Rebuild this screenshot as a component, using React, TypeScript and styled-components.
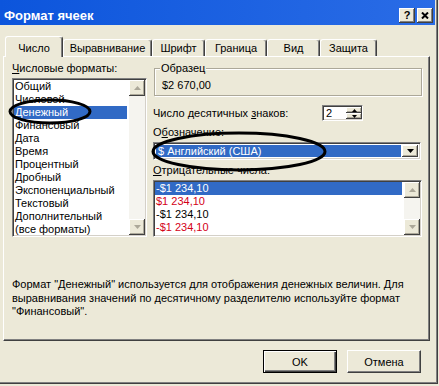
import React from "react";
import styled, { createGlobalStyle } from "styled-components";

const GlobalStyle = createGlobalStyle`
  html, body {
    margin: 0;
    padding: 0;
    background: #ece9d8;
  }
  body {
    font-family: "Liberation Sans", Arial, sans-serif;
    font-size: 11px;
    color: #000;
  }
  * { box-sizing: border-box; }
`;

const Window = styled.div`
  position: relative;
  width: 438px;
  height: 384px;
  border-right: 1px solid #404040;
  border-bottom: 1px solid #404040;
  box-shadow: inset -1px -1px 0 #808080;
  background: #ece9d8;
  display: flex;
  flex-direction: column;
`;

const TitleBar = styled.div`
  width: 435px;
  height: 25px;
  padding: 5px 2px 0 4px;
  display: flex;
  align-items: center;
  background: linear-gradient(to right, #0c55dc, #2a6ce6);
  color: #fff;
  font-weight: bold;
  font-size: 13px;
`;

const TitleButtons = styled.div`
  margin-left: auto;
  display: flex;
  gap: 2px;
`;

const TitleButton = styled.div`
  width: 16px;
  height: 15px;
  background: #ece9d8;
  box-shadow: inset -1px -1px 0 #404040, inset 1px 1px 0 #fff,
    inset -2px -2px 0 #808080;
  display: flex;
  align-items: center;
  justify-content: center;
  color: #000;
  font-size: 11px;
  font-weight: bold;
`;

const TabStrip = styled.div`
  position: relative;
  z-index: 1;
  margin-top: 11px;
  height: 20px;
  padding-left: 5px;
  display: flex;
  align-items: flex-end;
`;

const Tab = styled.div<{ $active?: boolean; $w: number }>`
  width: ${(p) => p.$w}px;
  height: ${(p) => (p.$active ? 21 : 17)}px;
  margin-bottom: ${(p) => (p.$active ? -1 : 0)}px;
  padding-top: ${(p) => (p.$active ? 1 : 0)}px;
  background: #ece9d8;
  border-top: 1px solid #fff;
  border-left: 1px solid #fff;
  border-right: 1px solid #404040;
  box-shadow: inset -1px 0 0 #808080;
  border-radius: 3px 3px 0 0;
  display: flex;
  align-items: center;
  justify-content: center;
`;

const Panel = styled.div`
  margin-left: 3px;
  width: 427px;
  height: 285px;
  border-top: 1px solid #fff;
  border-left: 1px solid #fff;
  border-right: 1px solid #404040;
  border-bottom: 1px solid #404040;
  box-shadow: inset -1px -1px 0 #808080;
  padding: 5px 0 0 8px;
  display: grid;
  grid-template-columns: 135px 269px;
  grid-template-rows: 175px auto;
  column-gap: 6px;
  align-content: start;
`;

const Column = styled.div`
  display: flex;
  flex-direction: column;
`;

const Label = styled.div<{ $gap?: number }>`
  line-height: 13px;
  margin-top: ${(p) => p.$gap ?? 0}px;
  white-space: nowrap;
  u { text-decoration: underline; }
`;

const Sunken = styled.div`
  background: #fff;
  border: 1px solid;
  border-color: #808080 #fff #fff #808080;
  box-shadow: inset 1px 1px 0 #404040, inset -1px -1px 0 #d4d0c8;
  padding: 1px;
`;

const ListBox = styled(Sunken)<{ $w: number; $h: number; $gap: number }>`
  width: ${(p) => p.$w}px;
  height: ${(p) => p.$h}px;
  margin-top: ${(p) => p.$gap}px;
  display: flex;
  overflow: hidden;
`;

const Items = styled.div<{ $right: number }>`
  flex: 1;
  padding-right: ${(p) => p.$right}px;
  overflow: hidden;
`;

const Item = styled.div<{ $selected?: boolean; $red?: boolean }>`
  height: 13px;
  line-height: 13px;
  padding-left: 1px;
  white-space: nowrap;
  background: ${(p) => (p.$selected ? "#316ac5" : "transparent")};
  color: ${(p) => (p.$selected ? "#fff" : p.$red ? "#d40018" : "#000")};
`;

const ScrollBar = styled.div`
  width: 16px;
  display: flex;
  flex-direction: column;
  background: #f5f4ef;
`;

const ScrollButton = styled.div<{ $h?: number }>`
  width: 16px;
  height: ${(p) => p.$h ?? 16}px;
  background: #ece9d8;
  box-shadow: inset -1px -1px 0 #404040, inset 1px 1px 0 #fff,
    inset -2px -2px 0 #aca899;
  display: flex;
  align-items: center;
  justify-content: center;
`;

const Track = styled.div`
  flex: 1;
`;

const Group = styled.fieldset`
  margin: 0 0 0 1px;
  width: 268px;
  padding: 4px 5px 3px 5px;
  border: 1px solid #aca899;
  box-shadow: inset 1px 1px 0 #fff, 1px 1px 0 #fff;
  legend {
    padding: 0 1px;
    line-height: 13px;
    background: #ece9d8;
  }
`;

const GroupValue = styled.div`
  line-height: 13px;
  padding-left: 2px;
`;

const SpinRow = styled.div`
  margin-top: 9px;
  height: 17px;
  display: flex;
  align-items: center;
`;

const Spinner = styled(Sunken)`
  margin-left: auto;
  margin-right: 59px;
  width: 41px;
  height: 16px;
  display: flex;
  padding: 1px;
`;

const SpinValue = styled.div`
  flex: 1;
  line-height: 12px;
  padding-left: 2px;
`;

const SpinButtons = styled.div`
  width: 15px;
  display: flex;
  flex-direction: column;
`;

const Combo = styled(Sunken)`
  margin-top: 3px;
  width: 268px;
  height: 18px;
  display: flex;
  padding: 2px;
`;

const ComboValue = styled.div`
  flex: 1;
  background: #316ac5;
  color: #fff;
  line-height: 12px;
  padding-left: 2px;
  margin-right: 1px;
`;

const Description = styled.div`
  grid-column: 1 / -1;
  margin-top: 41px;
  line-height: 13.5px;
  white-space: nowrap;
`;

const ButtonRow = styled.div`
  margin-top: 9px;
  padding-right: 16px;
  display: flex;
  justify-content: flex-end;
  gap: 10px;
`;

const Button = styled.div<{ $default?: boolean }>`
  width: 74px;
  height: 23px;
  display: flex;
  align-items: center;
  justify-content: center;
  background: #ece9d8;
  border: 1px solid;
  border-color: ${(p) => (p.$default ? "#000" : "#fff #404040 #404040 #fff")};
  box-shadow: ${(p) =>
    p.$default
      ? "inset 1px 1px 0 #fff, inset -1px -1px 0 #404040, inset -2px -2px 0 #808080"
      : "inset -1px -1px 0 #808080"};
`;

const Marks = styled.svg`
  position: absolute;
  left: 0;
  top: 0;
  pointer-events: none;
`;

const Arrow = ({ down, color = "#000", w = 7 }: { down?: boolean; color?: string; w?: number }) => {
  const h = Math.ceil(w / 2);
  return (
    <svg width={w} height={h} viewBox={`0 0 ${w} ${h}`}>
      <polygon
        points={down ? `0,0 ${w},0 ${w / 2},${h}` : `0,${h} ${w},${h} ${w / 2},0`}
        fill={color}
      />
    </svg>
  );
};

const formats = [
  "Общий",
  "Числовой",
  "Денежный",
  "Финансовый",
  "Дата",
  "Время",
  "Процентный",
  "Дробный",
  "Экспоненциальный",
  "Текстовый",
  "Дополнительный",
  "(все форматы)",
];

const negatives = [
  { text: "-$1 234,10", selected: true },
  { text: "$1 234,10", red: true },
  { text: "-$1 234,10" },
  { text: "-$1 234,10", red: true },
];

const tabs = [
  { title: "Число", w: 58, active: true },
  { title: "Выравнивание", w: 89 },
  { title: "Шрифт", w: 53 },
  { title: "Граница", w: 62 },
  { title: "Вид", w: 53 },
  { title: "Защита", w: 57 },
];

const DisabledScroll = () => (
  <ScrollBar>
    <ScrollButton>
      <Arrow color="#aca899" />
    </ScrollButton>
    <Track />
    <ScrollButton>
      <Arrow down color="#aca899" />
    </ScrollButton>
  </ScrollBar>
);

export default function App() {
  return (
    <>
      <GlobalStyle />
      <Window>
        <TitleBar>
          Формат ячеек
          <TitleButtons>
            <TitleButton>?</TitleButton>
            <TitleButton>
              <svg width="8" height="7" viewBox="0 0 8 7">
                <path d="M1 0.5 L7 6.5 M7 0.5 L1 6.5" stroke="#000" strokeWidth="2" />
              </svg>
            </TitleButton>
          </TitleButtons>
        </TitleBar>

        <TabStrip>
          {tabs.map((t) => (
            <Tab key={t.title} $w={t.w} $active={t.active}>
              {t.title}
            </Tab>
          ))}
        </TabStrip>

        <Panel>
          <Column>
            <Label>
              <u>Ч</u>исловые форматы:
            </Label>
            <ListBox $w={135} $h={160} $gap={3}>
              <Items $right={2}>
                {formats.map((f) => (
                  <Item key={f} $selected={f === "Денежный"}>
                    {f}
                  </Item>
                ))}
              </Items>
              <DisabledScroll />
            </ListBox>
          </Column>

          <Column>
            <Group>
              <legend>Образец</legend>
              <GroupValue>$2 670,00</GroupValue>
            </Group>
            <SpinRow>
              <span>
                Число десятичных <u>з</u>наков:
              </span>
              <Spinner>
                <SpinValue>2</SpinValue>
                <SpinButtons>
                  <ScrollButton $h={6}>
                    <Arrow w={5} />
                  </ScrollButton>
                  <ScrollButton $h={6}>
                    <Arrow down w={5} />
                  </ScrollButton>
                </SpinButtons>
              </Spinner>
            </SpinRow>
            <Label $gap={4}>
              О<u>б</u>означение:
            </Label>
            <Combo>
              <ComboValue>$ Английский (США)</ComboValue>
              <ScrollButton $h={12}>
                <Arrow down />
              </ScrollButton>
            </Combo>
            <Label $gap={4}>
              <u>О</u>трицательные числа:
            </Label>
            <ListBox $w={269} $h={58} $gap={3}>
              <Items $right={2}>
                {negatives.map((n, i) => (
                  <Item key={i} $selected={n.selected} $red={n.red}>
                    {n.text}
                  </Item>
                ))}
              </Items>
              <DisabledScroll />
            </ListBox>
          </Column>

          <Description>
            Формат "Денежный" используется для отображения денежных величин. Для
            <br />
            выравнивания значений по десятичному разделителю используйте формат
            <br />
            "Финансовый".
          </Description>
        </Panel>

        <ButtonRow>
          <Button $default>OK</Button>
          <Button>Отмена</Button>
        </ButtonRow>

        <Marks width="439" height="386" viewBox="0 0 439 386">
          <ellipse cx="50" cy="111.5" rx="40" ry="11.5" fill="none" stroke="#000" strokeWidth="3" />
          <ellipse cx="239" cy="151.5" rx="86" ry="18.5" fill="none" stroke="#000" strokeWidth="3" />
        </Marks>
      </Window>
    </>
  );
}
